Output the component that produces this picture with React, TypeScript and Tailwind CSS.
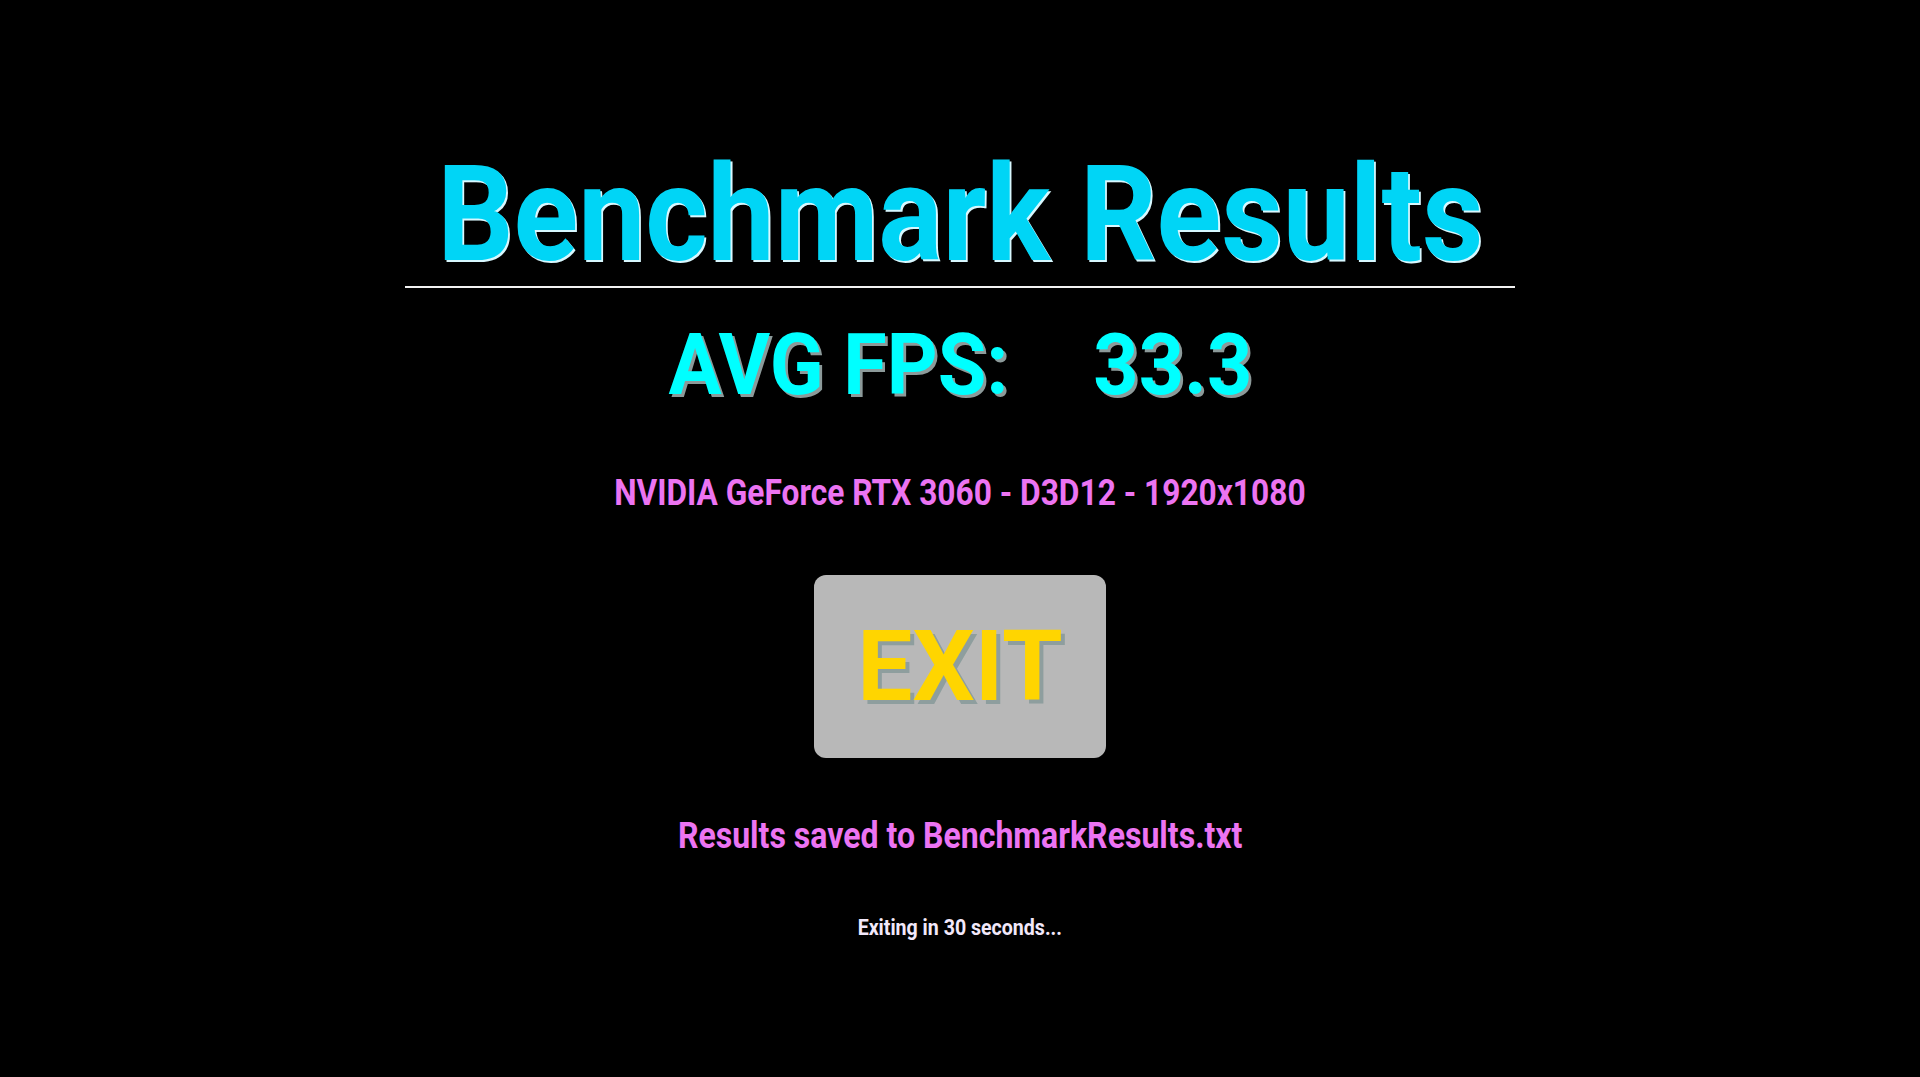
export default function App() {
  return (
    <div className="min-h-screen w-full bg-black font-['Roboto',sans-serif] flex flex-col items-center pt-[148px]">
      {/* Title */}
      <h1 className="text-[133px] leading-none font-bold text-[#00d5f6] [text-shadow:2px_2px_0_#d8f8ff] scale-x-90">
        Benchmark Results
      </h1>
      <div className="w-[1110px] h-[2px] bg-[#f2f2f2] mt-[5px]" />

      {/* Score */}
      <div className="mt-[34px] flex items-baseline gap-[92px] text-[86px] leading-none font-bold text-[#00ffff] [text-shadow:3px_3px_0_#8c9a9a] scale-x-[0.92]">
        <span>AVG FPS:</span>
        <span>33.3</span>
      </div>

      <p className="mt-[67px] text-[36px] leading-none font-bold text-[#ec74f2] scale-x-[0.88]">
        NVIDIA GeForce RTX 3060 - D3D12 - 1920x1080
      </p>

      {/* Exit button */}
      <button className="mt-[64px] w-[292px] h-[183px] rounded-[12px] bg-[#b8b8b8] flex items-center justify-center">
        <span className="text-[98px] leading-none font-bold text-[#ffd500] [text-shadow:4px_4px_0_#8e9e9e]">
          EXIT
        </span>
      </button>

      <p className="mt-[60px] text-[36px] leading-none font-bold text-[#ec74f2] scale-x-[0.89]">
        Results saved to BenchmarkResults.txt
      </p>

      <p className="mt-[63px] text-[22px] leading-none font-bold text-[#f2e8fa] scale-x-[0.89]">
        Exiting in 30 seconds...
      </p>
    </div>
  );
}
